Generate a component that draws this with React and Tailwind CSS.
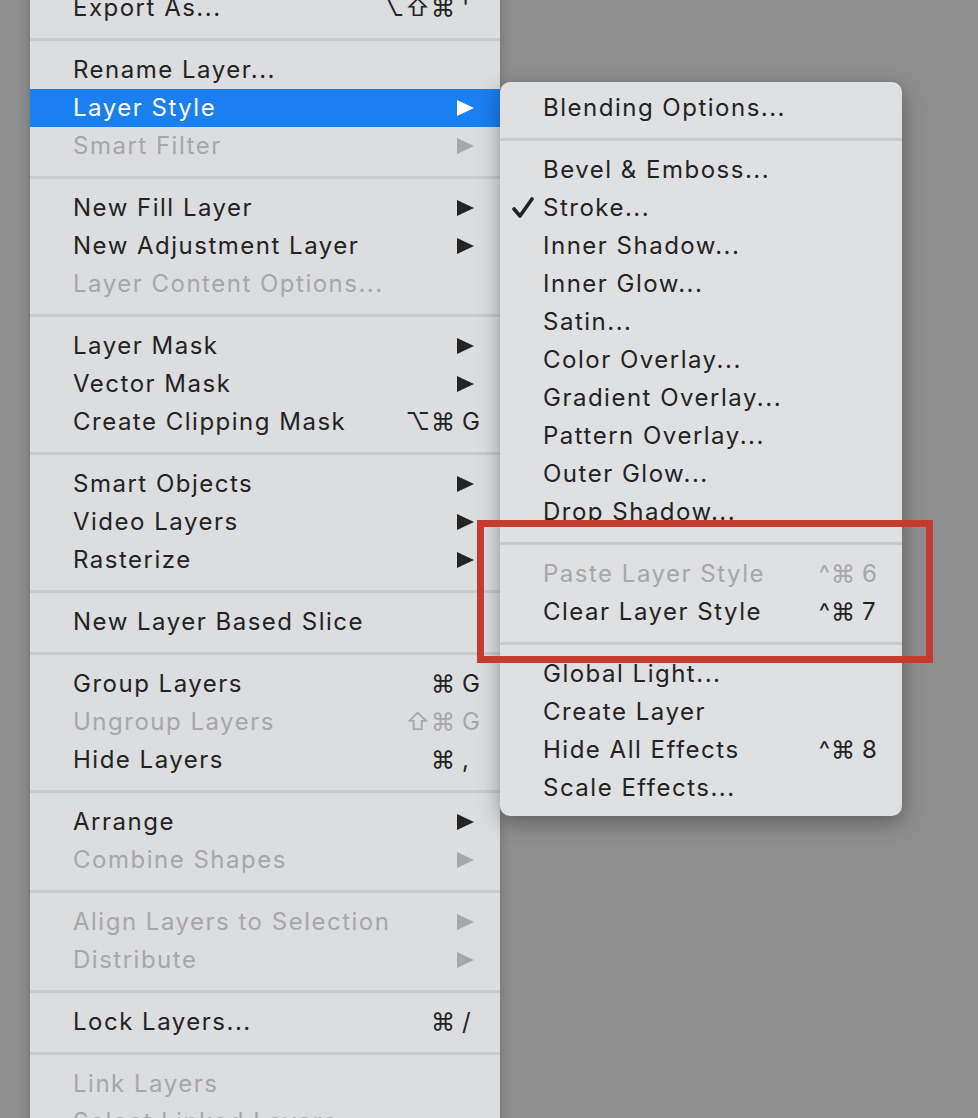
import React from 'react'

const mainItems = [
  { label: 'Export As...', mods: '⌥⇧⌘', keyChar: "'" },
  { sep: true },
  { label: 'Rename Layer...' },
  { label: 'Layer Style', sub: true, active: true },
  { label: 'Smart Filter', sub: true, disabled: true },
  { sep: true },
  { label: 'New Fill Layer', sub: true },
  { label: 'New Adjustment Layer', sub: true },
  { label: 'Layer Content Options...', disabled: true },
  { sep: true },
  { label: 'Layer Mask', sub: true },
  { label: 'Vector Mask', sub: true },
  { label: 'Create Clipping Mask', mods: '⌥⌘', keyChar: 'G' },
  { sep: true },
  { label: 'Smart Objects', sub: true },
  { label: 'Video Layers', sub: true },
  { label: 'Rasterize', sub: true },
  { sep: true },
  { label: 'New Layer Based Slice' },
  { sep: true },
  { label: 'Group Layers', mods: '⌘', keyChar: 'G' },
  { label: 'Ungroup Layers', mods: '⇧⌘', keyChar: 'G', disabled: true },
  { label: 'Hide Layers', mods: '⌘', keyChar: ',' },
  { sep: true },
  { label: 'Arrange', sub: true },
  { label: 'Combine Shapes', sub: true, disabled: true },
  { sep: true },
  { label: 'Align Layers to Selection', sub: true, disabled: true },
  { label: 'Distribute', sub: true, disabled: true },
  { sep: true },
  { label: 'Lock Layers...', mods: '⌘', keyChar: '/' },
  { sep: true },
  { label: 'Link Layers', disabled: true },
  { label: 'Select Linked Layers', disabled: true },
]

const styleItems = [
  { label: 'Blending Options...' },
  { sep: true },
  { label: 'Bevel & Emboss...' },
  { label: 'Stroke...', checked: true },
  { label: 'Inner Shadow...' },
  { label: 'Inner Glow...' },
  { label: 'Satin...' },
  { label: 'Color Overlay...' },
  { label: 'Gradient Overlay...' },
  { label: 'Pattern Overlay...' },
  { label: 'Outer Glow...' },
  { label: 'Drop Shadow...' },
  { sep: true },
  { label: 'Paste Layer Style', mods: '^⌘', keyChar: '6', disabled: true },
  { label: 'Clear Layer Style', mods: '^⌘', keyChar: '7' },
  { sep: true },
  { label: 'Global Light...' },
  { label: 'Create Layer' },
  { label: 'Hide All Effects', mods: '^⌘', keyChar: '8' },
  { label: 'Scale Effects...' },
]

const Arrow = ({ color }) => (
  <svg width="17" height="16" viewBox="0 0 17 16" className="shrink-0">
    <polygon points="0,0 17,8 0,16" fill={color} />
  </svg>
)

const Check = () => (
  <svg width="22" height="22" viewBox="0 0 22 22" className="shrink-0">
    <path d="M2 12 L8 19 L20 2" fill="none" stroke="#232323" strokeWidth="3.6" strokeLinecap="round" strokeLinejoin="round" />
  </svg>
)

const Separator = () => (
  <div className="h-[24px] flex items-center">
    <div className="w-full h-[3px] bg-[#c9cacc]" />
  </div>
)

const MenuRow = ({ item, keyPad }) => {
  const textColor = item.active
    ? 'text-white'
    : item.disabled
      ? 'text-[#a6a7a9]'
      : 'text-[#232323]'
  const arrowColor = item.active ? '#ffffff' : item.disabled ? '#a6a7a9' : '#232323'

  return (
    <div
      className={`h-[38px] flex items-center pl-[43px] ${keyPad} ${textColor} ${item.active ? 'bg-[#1a7ff1]' : ''}`}
    >
      <span className="flex-1 whitespace-nowrap tracking-[1.5px]">{item.label}</span>
      {item.sub && (
        <div className="w-[20px] flex justify-start mr-[5px]">
          <Arrow color={arrowColor} />
        </div>
      )}
      {item.mods && (
        <div className="flex items-center">
          <span className="text-right tracking-[1px]">{item.mods}</span>
          <span className="w-[20px] ml-[6px] text-left">{item.keyChar}</span>
        </div>
      )}
    </div>
  )
}

const App = () => {
  return (
    <div
      className="relative w-[978px] h-[1118px] overflow-hidden bg-[#8e8e8e] text-[24px] leading-none"
      style={{ fontFamily: 'Inter, "DejaVu Sans", sans-serif' }}
    >
      {/* Layer menu */}
      <div className="ml-[30px] w-[470px] -mt-[11px] bg-[#dcdddf] shadow-[0_0_10px_rgba(0,0,0,0.25)]">
        {mainItems.map((item, i) =>
          item.sep ? <Separator key={i} /> : <MenuRow key={i} item={item} keyPad="pr-[18px]" />
        )}
      </div>

      {/* Layer Style submenu */}
      <div className="absolute left-[500px] top-[82px] w-[402px] pt-[7px] pb-[9px] rounded-[10px] bg-[#dfe0e2] shadow-[0_6px_22px_rgba(0,0,0,0.35)]">
        {styleItems.map((item, i) =>
          item.sep ? (
            <Separator key={i} />
          ) : (
            <div key={i} className="relative">
              {item.checked && (
                <div className="absolute left-[12px] top-[8px]">
                  <Check />
                </div>
              )}
              <MenuRow item={item} keyPad="pr-[20px]" />
            </div>
          )
        )}
      </div>

      {/* highlight box */}
      <div className="absolute left-[477px] top-[520px] w-[456px] h-[143px] border-[7px] border-[#c43c2f]" />
    </div>
  )
}

export default App
